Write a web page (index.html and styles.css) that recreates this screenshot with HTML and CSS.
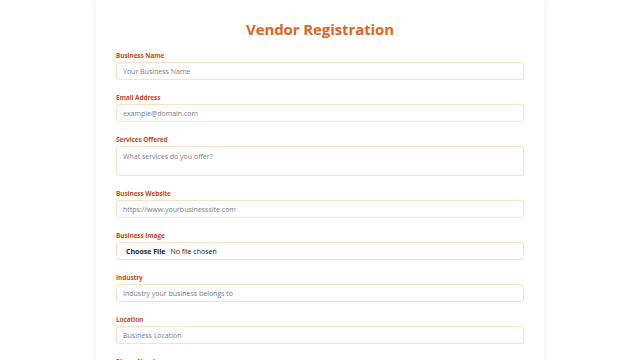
FILE: index.html
```html
<!DOCTYPE html>
<html lang="en">
<head>
<meta charset="utf-8">
<title>Vendor Registration</title>
<link rel="stylesheet" href="styles.css">
</head>
<body>
<div class="card">
  <h2 class="title">Vendor Registration</h2>
  <form class="form">
    <div class="group">
      <label class="label">Business Name</label>
      <input class="field" type="text" placeholder="Your Business Name">
    </div>
    <div class="group">
      <label class="label">Email Address</label>
      <input class="field" type="email" placeholder="example@domain.com">
    </div>
    <div class="group">
      <label class="label">Services Offered</label>
      <textarea class="field area" placeholder="What services do you offer?"></textarea>
    </div>
    <div class="group">
      <label class="label">Business Website</label>
      <input class="field" type="text" placeholder="https://www.yourbusinesssite.com">
    </div>
    <div class="group">
      <label class="label">Business Image</label>
      <div class="field file"><span class="file-btn">Choose File</span><span class="file-name">No file chosen</span></div>
    </div>
    <div class="group">
      <label class="label">Industry</label>
      <input class="field" type="text" placeholder="Industry your business belongs to">
    </div>
    <div class="group">
      <label class="label">Location</label>
      <input class="field" type="text" placeholder="Business Location">
    </div>
    <div class="group">
      <label class="label">Phone Number</label>
      <input class="field" type="text" placeholder="Phone Number">
    </div>
  </form>
</div>
</body>
</html>
```
FILE: styles.css
```css
* { box-sizing: border-box; }
html, body { margin: 0; background: #ffffff; }
body { font-family: "Open Sans", "Noto Sans", sans-serif; }
.card {
  width: 448px;
  margin: 0 auto;
  padding: 19px 20px 20px;
  background: #fff;
  box-shadow: 0 0 6px rgba(0,0,0,0.07);
  min-height: 400px;
}
.title {
  margin: 0 0 12px;
  text-align: center;
  font-size: 15px;
  line-height: 20px;
  font-weight: 700;
  color: #e1641f;
  letter-spacing: -0.1px;
}
.group { margin-bottom: 13px; }
.label {
  display: block;
  font-size: 6.5px;
  line-height: 9px;
  font-weight: 700;
  color: #c24d22;
  margin-bottom: 2px;
  letter-spacing: -0.1px;
}
.field {
  display: block;
  width: 100%;
  height: 18px;
  border: 1px solid #fbe0c6;
  border-radius: 3px;
  padding: 0 6px;
  font-family: inherit;
  font-size: 7px;
  color: #333;
  background: #fff;
  outline: none;
}
.field::placeholder { color: #767c88; }
.area { height: 30px; padding-top: 5px; resize: none; }
.file { display: flex; align-items: center; padding: 0 9px; font-size: 7px; color: #222; }
.file-btn { font-weight: 700; margin-right: 5px; }
```
